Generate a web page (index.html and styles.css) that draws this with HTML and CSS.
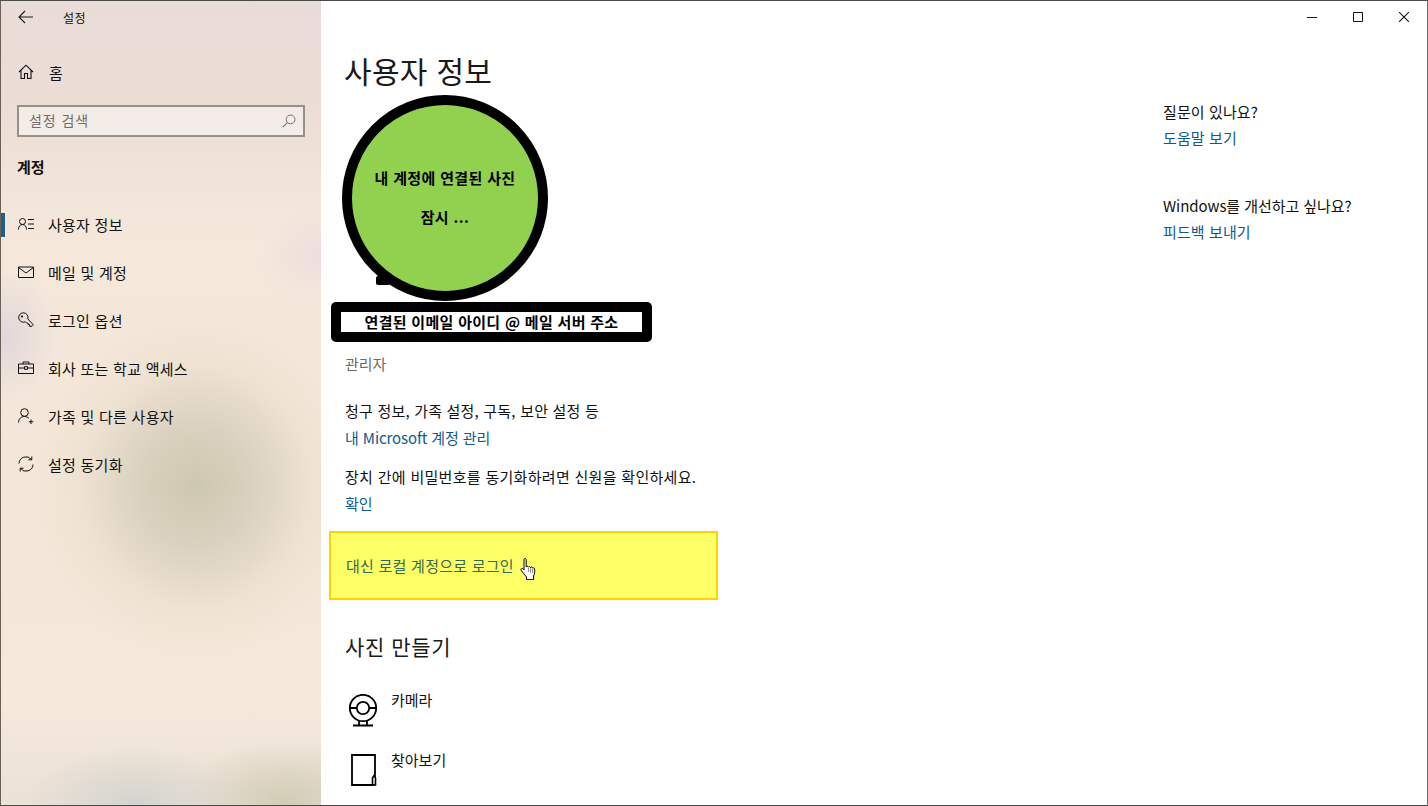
FILE: index.html
```html
<!DOCTYPE html>
<html lang="ko">
<head>
<meta charset="utf-8">
<title>설정</title>
<link rel="stylesheet" href="styles.css">
</head>
<body>
<div class="window">
  <aside class="sidebar">
    <div class="titlebar">
      <svg class="back" width="16" height="14" viewBox="0 0 16 14"><path d="M7 1 1 7l6 6M1 7h14" fill="none" stroke="#1a1a1a" stroke-width="1.1"/></svg>
      <span class="apptitle">설정</span>
    </div>
    <div class="home">
      <svg class="nav-icon" width="16" height="16" viewBox="0 0 16 16"><path d="M1 8 8 1.2 15 8M3 6.5V14.5H6.5V9.500H9.500V14.500H13V6.500" fill="none" stroke="#111" stroke-width="1.1"/></svg>
      <span>홈</span>
    </div>
    <div class="search">
      <span class="search-text">설정 검색</span>
      <svg width="14" height="14" viewBox="0 0 14 14"><circle cx="8.600" cy="5.400" r="4.400" fill="none" stroke="#77706a" stroke-width="1"/><path d="M5.400 8.600 .8 13.200" stroke="#77706a" stroke-width="1.100"/></svg>
    </div>
    <h2 class="section">계정</h2>
    <nav class="nav">
      <div class="nav-item active">
        <svg class="nav-icon" width="16" height="16" viewBox="0 0 16 16"><circle cx="4.500" cy="5.500" r="3" fill="none" stroke="#111"/><path d="M.5 13.500c0-3 1.600-5 4-5s4 2 4 5M10 3.500h6M10 8h6M10 12.500h6" fill="none" stroke="#111"/></svg>
        <span>사용자 정보</span>
      </div>
      <div class="nav-item">
        <svg class="nav-icon" width="16" height="16" viewBox="0 0 16 16"><path d="M.5 3h15v10.500H.5zM.5 3.500 8 9l7.500-5.500" fill="none" stroke="#111"/></svg>
        <span>메일 및 계정</span>
      </div>
      <div class="nav-item">
        <svg class="nav-icon" width="16" height="16" viewBox="0 0 16 16"><path d="M5.500 .8a4.700 4.700 0 1 0 1.800 9l1.300 1.300h1.500v1.500h1.500v1.700h2.400l1-1-.1-1L9.800 6.900A4.700 4.700 0 0 0 5.500 .8z" fill="none" stroke="#111"/><circle cx="4" cy="4.500" r="1.100" fill="#111"/></svg>
        <span>로그인 옵션</span>
      </div>
      <div class="nav-item">
        <svg class="nav-icon" width="16" height="16" viewBox="0 0 16 16"><path d="M.5 4h15v9.500H.5zM5 4V2h6v2M.5 8h6M9.500 8h6M6.500 6.700h3v2.600h-3z" fill="none" stroke="#111"/></svg>
        <span>회사 또는 학교 액세스</span>
      </div>
      <div class="nav-item">
        <svg class="nav-icon" width="16" height="16" viewBox="0 0 16 16"><circle cx="6.500" cy="4.500" r="3.800" fill="none" stroke="#111"/><path d="M.5 14.500c0-3.500 2.500-6 6-6 1.800 0 3.300.7 4.300 1.800M13 11.500v4.500M10.800 13.800h4.500" fill="none" stroke="#111"/></svg>
        <span>가족 및 다른 사용자</span>
      </div>
      <div class="nav-item">
        <svg class="nav-icon" width="16" height="16" viewBox="0 0 16 16"><path d="M1 7.500A7 7 0 0 1 13.500 3.500M15 8.500A7 7 0 0 1 2.500 12.500M13.800 .5v3.300h-3.300M2.200 15.500v-3.300h3.300" fill="none" stroke="#111"/></svg>
        <span>설정 동기화</span>
      </div>
    </nav>
  </aside>

  <main class="content">
    <div class="caption-buttons">
      <svg width="10" height="10" viewBox="0 0 10 10"><path d="M0 5.500h10" stroke="#111"/></svg>
      <svg width="10" height="10" viewBox="0 0 10 10"><path d="M.5.5h9v9h-9z" fill="none" stroke="#111"/></svg>
      <svg width="10" height="10" viewBox="0 0 10 10"><path d="M0 0l10 10M10 0 0 10" stroke="#111" stroke-width="1.050"/></svg>
    </div>
    <div class="columns">
      <section class="main-col">
        <h1 class="page-title">사용자 정보</h1>
        <div class="avatar">
          <span class="bump"></span>
          <p>내 계정에 연결된 사진</p>
          <p>잠시 ...</p>
        </div>
        <div class="email-mask"><span>연결된 이메일 아이디 @ 메일 서버 주소</span></div>
        <p class="role">관리자</p>
        <p class="line-billing">청구 정보, 가족 설정, 구독, 보안 설정 등</p>
        <a class="link line-manage">내 Microsoft 계정 관리</a>
        <p class="line-sync">장치 간에 비밀번호를 동기화하려면 신원을 확인하세요.</p>
        <a class="link line-verify">확인</a>
        <div class="highlight">
          <a class="highlight-link">대신 로컬 계정으로 로그인</a>
          <svg class="cursor" width="18" height="23" viewBox="0 0 18 23"><path d="M4 1.500c0-1.300 2.200-1.300 2.200 0V9c.4-1 2-1 2.200.2.400-.9 1.900-.8 2.100.3.500-.8 2-.6 2.100.6.400-.5 1.900-.4 2 .8.300 2.500.1 5-1 7.100v3.500H6.500V19C5 17 3 15 1.200 12.500c-1-1.600.8-2.800 2-1.600L4 12z" fill="#fff" stroke="#000" stroke-width="1"/><path d="M7 21h6.500v1H7z" fill="#223"/><path d="M8.400 10v4M10.500 10.500v4M12.600 11v4" stroke="#667" stroke-width=".8"/></svg>
        </div>
        <h3 class="sub-title">사진 만들기</h3>
        <div class="photo-row camera-row">
          <svg class="photo-icon" width="30" height="33" viewBox="0 0 30 33"><circle cx="15" cy="14" r="13.200" fill="none" stroke="#000" stroke-width="1.800"/><circle cx="15" cy="14" r="6.200" fill="none" stroke="#000" stroke-width="1.800"/><path d="M2 14h7M21 14h7M11 27v4M19 27v4M5 31.500h20" fill="none" stroke="#000" stroke-width="1.800"/></svg>
          <span>카메라</span>
        </div>
        <div class="photo-row browse-row">
          <svg class="photo-icon" width="30" height="33" viewBox="0 0 30 33"><path d="M27 23V1H4v30h22" fill="none" stroke="#000" stroke-width="1.800"/><path d="M24.500 31v-7l1.500-2.500 1.500 2.500v7z" fill="none" stroke="#000" stroke-width="1.600"/></svg>
          <span>찾아보기</span>
        </div>
      </section>
      <aside class="help-col">
        <p>질문이 있나요?</p>
        <a class="link">도움말 보기</a>
        <p class="help-second">Windows를 개선하고 싶나요?</p>
        <a class="link">피드백 보내기</a>
      </aside>
    </div>
  </main>
</div>
</body>
</html>
```
FILE: styles.css
```css
* { box-sizing: border-box; margin: 0; padding: 0; }
html, body { width: 1428px; height: 806px; overflow: hidden; background: #fff; }
body {
  font-family: "Noto Sans CJK KR", "Noto Sans", sans-serif;
  font-size: 15px;
  color: #111;
}
.window {
  display: flex;
  width: 1428px;
  height: 806px;
  border: 1px solid #4c4a48;
  border-left-color: #6b6055;
  border-right-color: #6a6a6a;
  overflow: hidden;
}
.sidebar {
  width: 320px;
  flex: none;
  background:
    radial-gradient(ellipse 110px 60px at 135px 805px, #d2d4cf 0%, rgba(210,212,207,0) 100%),
    radial-gradient(ellipse 110px 60px at 285px 800px, #d2ccb6 0%, rgba(210,204,182,0) 100%),
    radial-gradient(ellipse 165px 175px at 195px 485px, #cec7b0 0%, rgba(214,206,186,.85) 35%, rgba(230,218,198,.4) 70%, rgba(236,224,205,0) 100%),
    radial-gradient(ellipse 60px 70px at 0 335px, #e1d6da 0%, rgba(227,216,216,0) 100%),
    radial-gradient(ellipse 70px 50px at 320px 255px, #ecdfdc 0%, rgba(236,223,220,0) 100%),
    linear-gradient(180deg, #e9dcd6 0%, #ecded6 14%, #f5e8db 30%, #f4e7d9 70%, #f5e9dc 87%, #ebe1d5 100%);
}
.titlebar {
  display: flex;
  align-items: center;
  height: 32px;
  padding-left: 17px;
}
.back { flex: none; }
.apptitle { margin-left: 29px; font-size: 12px; letter-spacing: .4px; }
.home {
  display: flex;
  align-items: center;
  height: 48px;
  margin-top: 15px;
  padding-left: 17px;
  font-size: 15px;
}
.home span { margin-left: 15px; }
.search {
  display: flex;
  align-items: center;
  justify-content: space-between;
  width: 288px;
  height: 32px;
  margin: 9px 0 0 16px;
  padding: 0 7px 2px 10px;
  border: 2px solid #96908b;
  background: rgba(255,255,255,.4);
}
.search-text { color: #6f6b67; font-size: 14px; letter-spacing: .9px; }
.search svg { margin-top: 2px; }
.section {
  margin: 18px 0 0 16px;
  height: 24px;
  line-height: 24px;
  font-size: 15px;
  font-weight: 700;
}
.nav { margin-top: 21px; }
.nav-item {
  position: relative;
  display: flex;
  align-items: center;
  height: 48px;
  padding-left: 17px;
  font-size: 15px;
  letter-spacing: .25px;
}
.nav-item span { margin-left: 14px; }
.nav-icon { flex: none; }
.nav-item.active::before {
  content: "";
  position: absolute;
  left: 0;
  top: 13px;
  width: 4px;
  height: 24px;
  background: #1f5f8b;
}
.content { position: relative; flex: 1; min-width: 0; background: #fff; }
.caption-buttons {
  position: absolute;
  top: 11px;
  right: 18px;
  display: flex;
  gap: 36px;
}
.columns { display: flex; }
.main-col { position: relative; width: 842px; padding-left: 24px; flex: none; }
.page-title {
  margin: 48px 0 0 -1px;
  height: 42px;
  line-height: 42px;
  font-size: 30px;
  font-weight: 400;
  letter-spacing: .3px;
  color: #1a1a1a;
}
.avatar {
  position: absolute;
  left: 21px;
  top: 94px;
  width: 206px;
  height: 206px;
  border-radius: 50%;
  border: 10px solid #000;
  background: #92d050;
  text-align: center;
  font-weight: 700;
  font-size: 15px;
  color: #000;
  padding-top: 63px;
  letter-spacing: .35px;
}
.avatar p { height: 39px; line-height: 20px; }
.bump {
  position: absolute;
  left: 24px;
  bottom: 6px;
  width: 14px;
  height: 9px;
  border-radius: 2px;
  background: #000;
}
.email-mask {
  position: absolute;
  left: 10px;
  top: 301px;
  width: 321px;
  height: 40px;
  border-radius: 5px;
  background: #000;
  padding: 10px;
}
.email-mask span {
  display: block;
  height: 20px;
  line-height: 20px;
  background: #fff;
  text-align: center;
  font-weight: 700;
  font-size: 15px;
  color: #000;
  letter-spacing: .3px;
}
.role { margin-top: 263px; height: 20px; line-height: 20px; color: #6b6b6b; }
.line-billing { margin-top: 27px; height: 20px; line-height: 20px; letter-spacing: .2px; }
.link { display: block; color: #0f5a8c; height: 20px; line-height: 20px; font-size: 15px; }
.line-manage { margin-top: 7px; letter-spacing: -.1px; }
.line-sync { margin-top: 19px; height: 20px; line-height: 20px; letter-spacing: .3px; }
.line-verify { margin-top: 7px; }
.highlight {
  display: flex;
  align-items: center;
  width: 389px;
  height: 69px;
  margin: 17px 0 0 -16px;
  padding: 0 0 0 15px;
  border: 2px solid #ffd200;
  background: #ffff66;
}
.highlight-link { color: #2f6b4f; font-size: 15px; letter-spacing: .25px; }
.cursor { margin: 7px 0 0 6px; }
.sub-title {
  margin-top: 30px;
  height: 32px;
  line-height: 32px;
  font-size: 21px;
  font-weight: 400;
  letter-spacing: .6px;
  color: #1a1a1a;
}
.photo-row { display: flex; align-items: flex-start; gap: 13px; height: 60px; margin-left: 3px; }
.photo-row span { line-height: 20px; margin-top: -2px; }
.photo-icon { margin-top: 2px; }
.camera-row { margin-top: 30px; }
.help-col { width: 200px; padding-top: 101px; flex: none; }
.help-col p { height: 20px; line-height: 20px; letter-spacing: .1px; }
.help-col .link { margin-top: 6px; letter-spacing: .1px; }
.help-col .help-second { margin-top: 48px; letter-spacing: -.07px; }
```
